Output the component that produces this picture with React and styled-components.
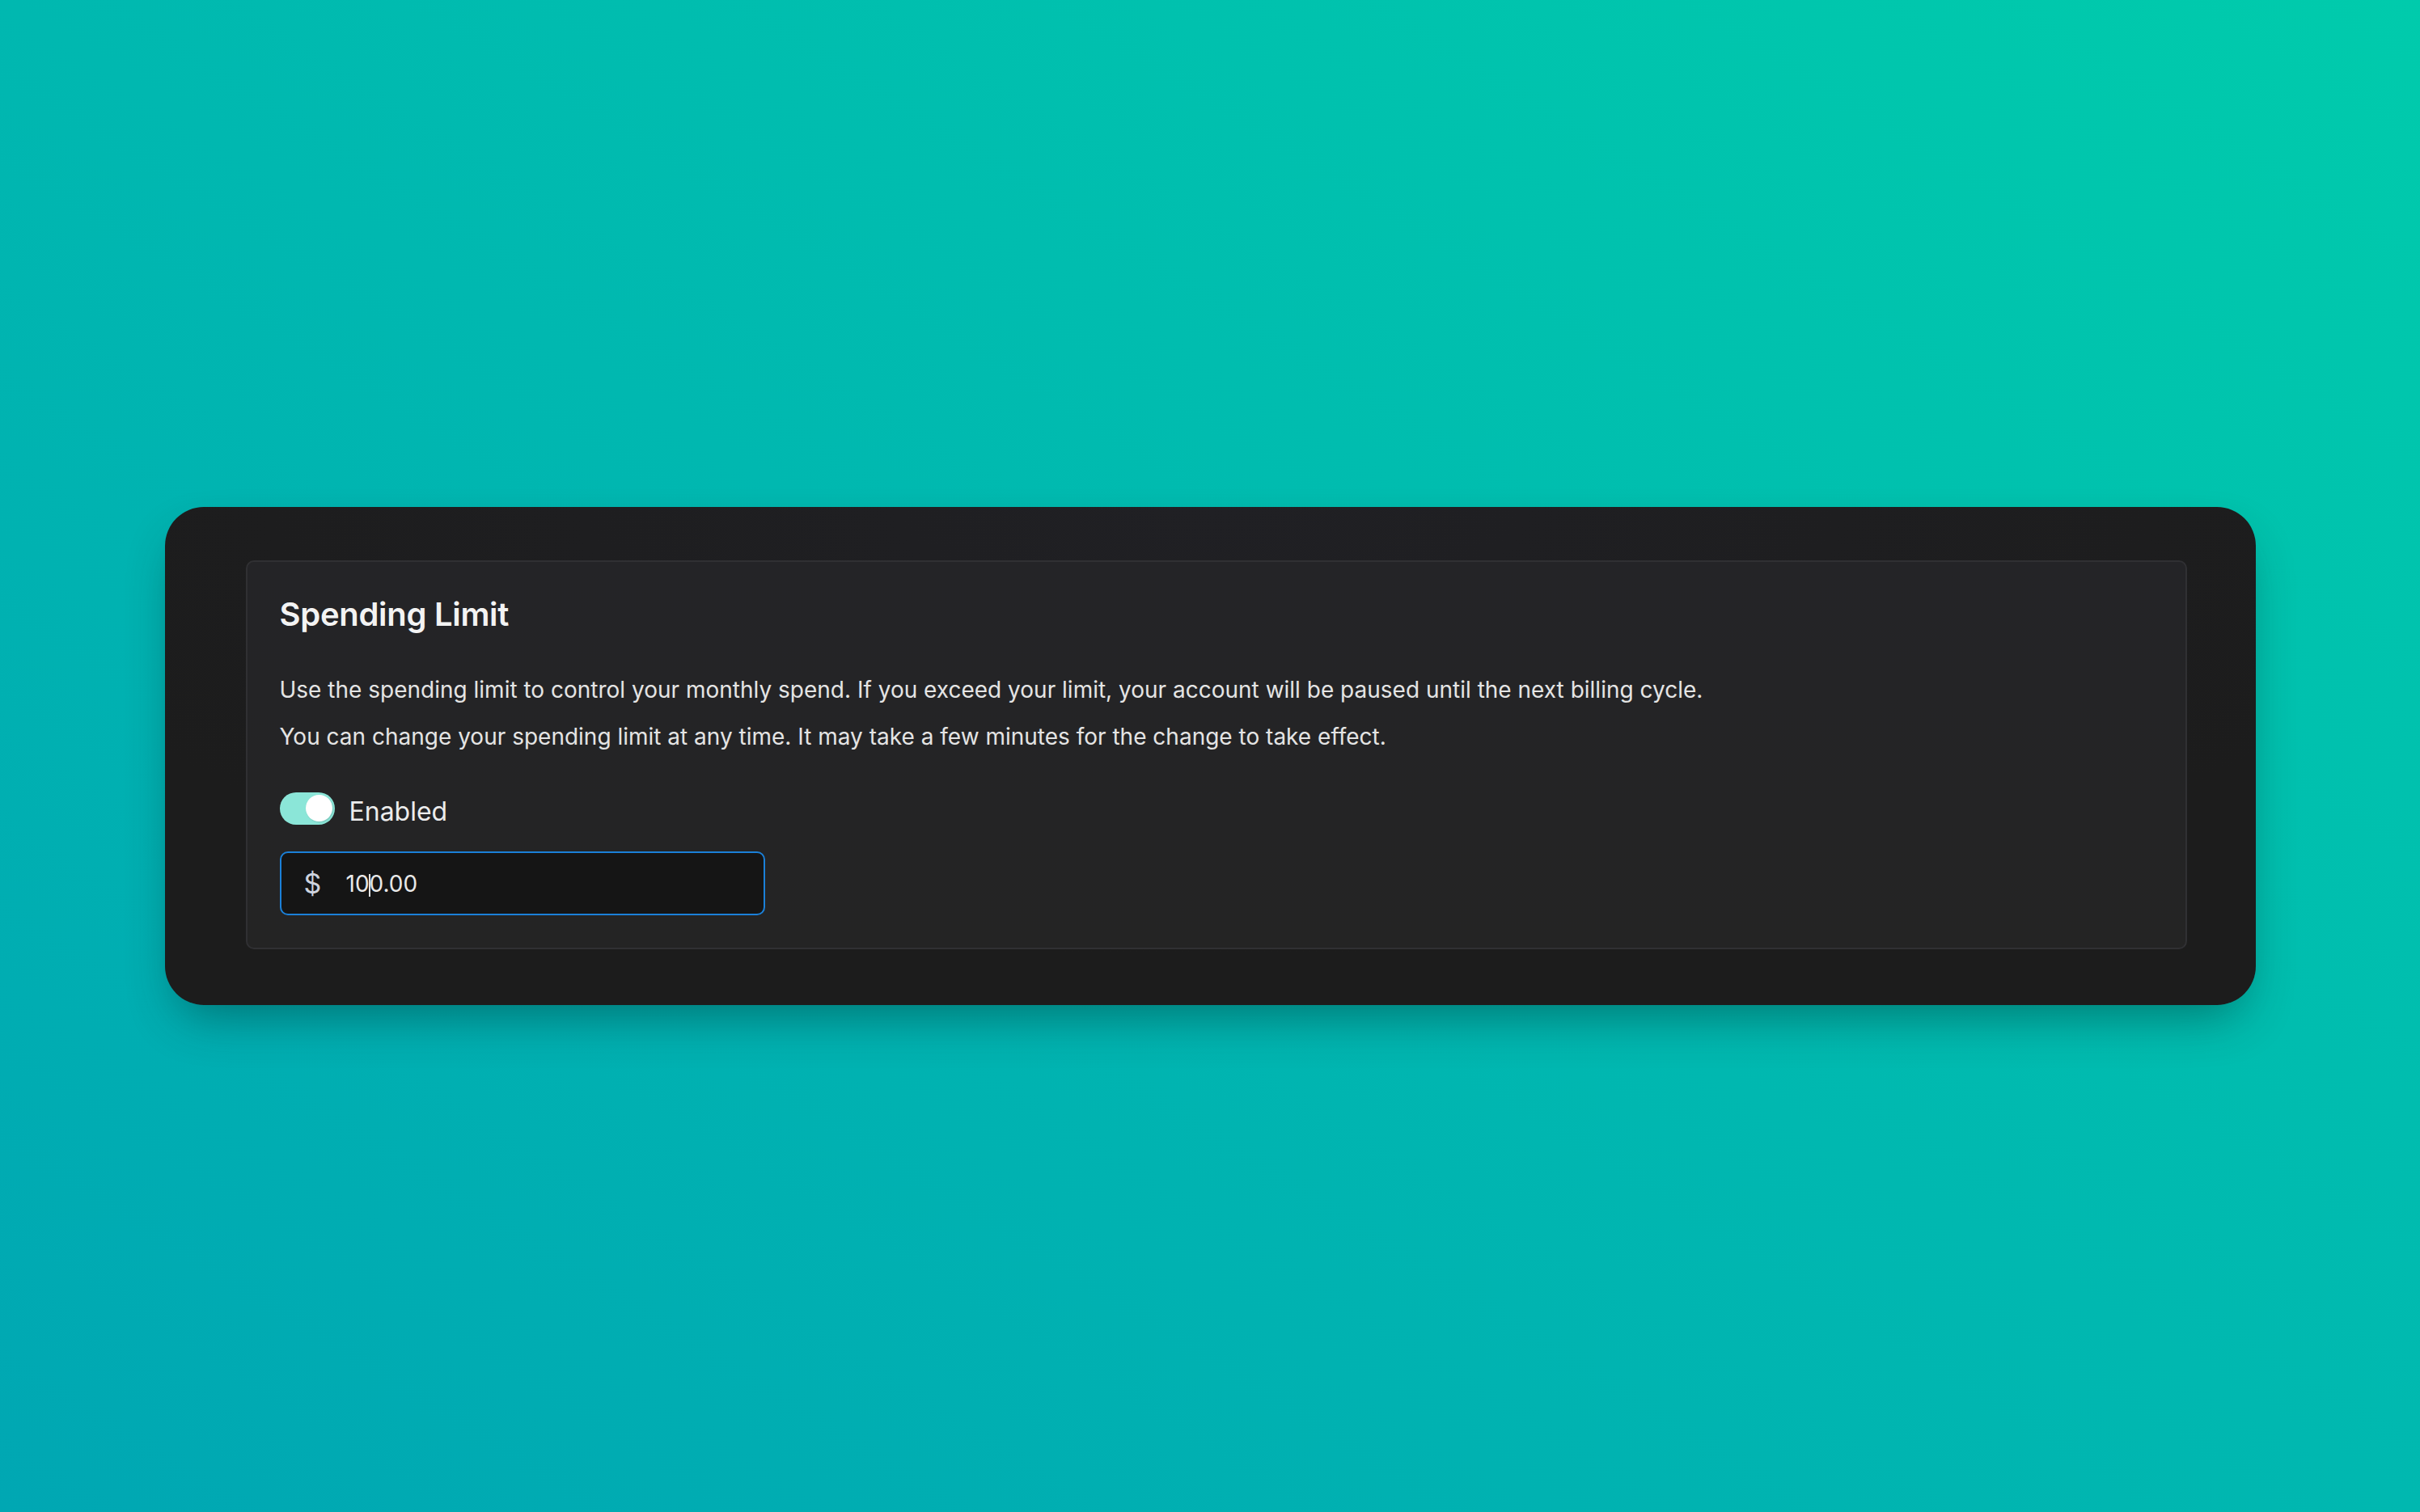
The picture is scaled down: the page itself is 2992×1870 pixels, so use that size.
import React from 'react';
import styled, { createGlobalStyle } from 'styled-components';

const GlobalStyle = createGlobalStyle`
  html, body, #root {
    margin: 0;
    height: 100%;
  }

  body {
    font-family: 'Inter', 'Noto Sans', sans-serif;
    -webkit-font-smoothing: antialiased;
  }
`;

const Page = styled.main`
  min-height: 100%;
  display: flex;
  align-items: center;
  justify-content: center;
  background: linear-gradient(to top right, #00a7b3 0%, #00b8b0 50%, #00cbac 100%);
`;

const Frame = styled.section`
  box-sizing: border-box;
  width: 2585px;
  padding: 66px 85px 69px 100px;
  border-radius: 48px;
  background: radial-gradient(ellipse 60% 90% at 50% 0%, #202024 0%, #1c1c1c 100%);
  box-shadow: 0 28px 60px -16px rgba(0, 40, 40, 0.45);
`;

const Panel = styled.div`
  padding: 40px;
  border: 2px solid #303033;
  border-radius: 10px;
  background: linear-gradient(180deg, #242427 0%, #242424 100%);
`;

const Title = styled.h2`
  margin: 0;
  font-size: 40px;
  font-weight: 600;
  letter-spacing: -0.3px;
  color: #f3f3f3;
`;

const Text = styled.p`
  margin: ${(p) => (p.first ? '48px' : '16px')} 0 0;
  font-size: 28px;
  line-height: 42px;
  color: #e4e4e4;
`;

const ToggleRow = styled.div`
  display: flex;
  align-items: center;
  gap: 18px;
  margin-top: 48px;
`;

const Switch = styled.button`
  position: relative;
  width: 68px;
  height: 40px;
  padding: 0;
  border: none;
  border-radius: 20px;
  background: #8be6d8;
  cursor: pointer;

  &::after {
    content: '';
    position: absolute;
    top: 3px;
    right: 3px;
    width: 33px;
    height: 33px;
    border-radius: 50%;
    background: #ffffff;
    box-shadow: 1px 1px 2px rgba(0, 0, 0, 0.15);
  }
`;

const Label = styled.span`
  padding-top: 8px;
  font-size: 32px;
  line-height: 32px;
  color: #ececec;
`;

const AmountField = styled.div`
  box-sizing: border-box;
  display: flex;
  align-items: center;
  width: 600px;
  height: 79px;
  margin-top: 33px;
  padding-left: 28px;
  border: 2px solid #1b80d8;
  border-radius: 10px;
  background: #151515;
`;

const Currency = styled.span`
  width: 21px;
  margin-right: 31px;
  font-size: 34px;
  color: #cdd3de;
`;

const Value = styled.span`
  display: flex;
  align-items: center;
  font-size: 28px;
  color: #e8e8e8;
`;

const Caret = styled.span`
  width: 2px;
  height: 28px;
  margin: 4px -1px 0;
  background: #e0e0e0;
`;

function App() {
  return (
    <>
      <GlobalStyle />
      <Page>
        <Frame>
          <Panel>
            <Title>Spending Limit</Title>
            <Text first>
              Use the spending limit to control your monthly spend. If you exceed
              your limit, your account will be paused until the next billing cycle.
            </Text>
            <Text>
              You can change your spending limit at any time. It may take a few
              minutes for the change to take effect.
            </Text>
            <ToggleRow>
              <Switch type="button" aria-pressed="true" aria-label="Enabled" />
              <Label>Enabled</Label>
            </ToggleRow>
            <AmountField>
              <Currency>$</Currency>
              <Value>
                10
                <Caret />
                0.00
              </Value>
            </AmountField>
          </Panel>
        </Frame>
      </Page>
    </>
  );
}

export default App;
